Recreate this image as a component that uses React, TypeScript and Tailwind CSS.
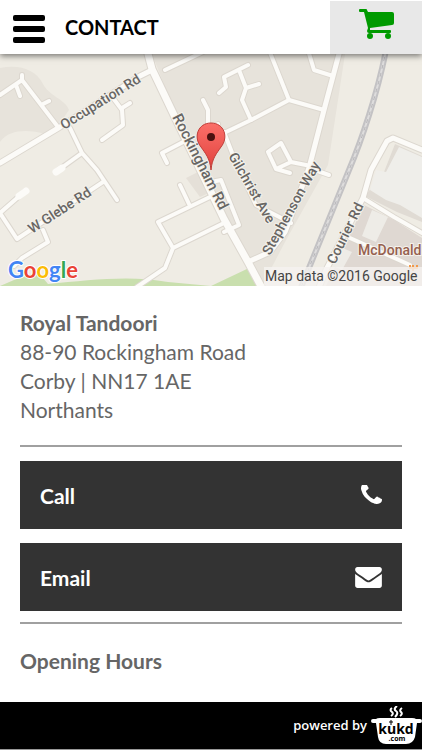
import type { ReactNode } from 'react';

const MINOR_ROADS = [
  'M0 95 L22 80 M16 85 L20 96 M22 75 L22 80 L58 127 M43 104 L49 101',
  'M70 128 L82 153 L97 170 L117 200 M82 153 L57 171',
  'M103 182 L17 239 L0 213 L24 192 M43 230 L48 242 L22 258 L14 266',
  'M113 98 L122 110 L123 125 L102 140 M122 108 L130 103',
  'M165 70 L203 52 M203 100 L208 110 L208 130',
  'M167 163 L162 153 L187 140',
  'M180 185 L189 204 M212 196 L158 222 L173 248 L165 268 L137 287 M173 248 L224 223',
  'M211 182 L221 180 L239 225 L224 232',
  'M219 93 L226 87 L224 77 L248 65 M239 70 L246 88 L259 84 M246 88 L242 100 L251 120',
  'M269 50 L289 100 M308 50 L314 70 L333 76',
  'M218 124 L211 128 M226 132 L251 120 L289 100 L324 110',
  'M224 132 L236 163 L256 205 L291 223',
  'M268 152 L281 143 L291 162 L311 166 M268 152 L276 169 L291 162 M276 169 L290 173 M309 168 L329 175',
  'M363 198 L394 217 L422 233 M350 238 L410 265',
];

const MAIN_ROADS = [
  'M152 70 L140 76 L60 127 L0 163',
  'M340 50 L324 110 L309 168 L285 232 L270 252 L248 262',
  'M422 150 L393 138 L387 141 L371 170 L363 198 L326 270 L318 290',
];

const ROCKINGHAM_ROAD = 'M147 50 L152 69 L173 113 L224 219 L248 262 L263 290';
const RAILWAY = 'M386 50 C378 92 361 142 349 170 L300 290';

interface MapLabelProps {
  x: number;
  y: number;
  angle: number;
  size?: number;
  children: ReactNode;
}

function MapLabel({ x, y, angle, size = 14, children }: MapLabelProps) {
  return (
    <text
      x={x}
      y={y}
      transform={`rotate(${angle} ${x} ${y})`}
      fontSize={size}
      fontWeight="500"
      fill="#686664"
      stroke="#f4f2ec"
      strokeWidth="2"
      paintOrder="stroke"
    >
      {children}
    </text>
  );
}

function LocationMap() {
  return (
    <svg
      viewBox="0 54 422 232"
      preserveAspectRatio="xMidYMid slice"
      role="img"
      aria-label="Map of Rockingham Road, Corby"
      className="block h-[232px] w-full bg-[#efece4] font-['Roboto','Liberation_Sans',sans-serif]"
    >
      <defs>
        <linearGradient id="pin" x1="0" y1="0" x2="0" y2="1">
          <stop offset="0" stopColor="#fb6f69" />
          <stop offset="1" stopColor="#e0423d" />
        </linearGradient>
      </defs>

      <rect y="54" width="422" height="232" fill="#efece4" />
      <path d="M0 68 C20 64 36 70 43 84 C48 95 66 100 69 110 L57 127 L45 134 C30 130 10 128 0 142Z" fill="#e7e3db" />
      <path d="M152 54 H345 L338 100 L328 165 L285 242 L262 286 L248 262 L182 130Z" fill="#e7e3db" />
      <path d="M186 178 L202 170 L211 192 L200 197Z" fill="#e5e0d8" />
      <path d="M384 172 L395 144 L422 156 V222 L397 212 L365 196Z" fill="#e0dbd4" />
      <path d="M399 147 L422 157 V218 L400 205 L386 200 L370 190 L376 170 L386 172Z" fill="#efeeea" />
      <path d="M364 205 L394 220 L422 238 V286 H326Z" fill="#dfd8d2" />
      <path d="M372 210 L388 217 L376 242 L362 236Z M340 247 L352 252 L342 270 L333 266Z" fill="#eeece7" />
      <path d="M0 286 L14 280 L38 272 L48 284 C90 280 130 275 168 282 L211 286 L249 268 L260 290 H0Z" fill="#c9dfae" />

      <g fill="none" strokeLinecap="round" strokeLinejoin="round">
        <g stroke="#dcd7cf">
          {MINOR_ROADS.map((d) => (
            <path key={d} d={d} strokeWidth="6" />
          ))}
          {MAIN_ROADS.map((d) => (
            <path key={d} d={d} strokeWidth="7" />
          ))}
          <path d={ROCKINGHAM_ROAD} strokeWidth="9" />
        </g>
        <g stroke="#fcfbf8">
          {MINOR_ROADS.map((d) => (
            <path key={d} d={d} strokeWidth="4" />
          ))}
          {MAIN_ROADS.map((d) => (
            <path key={d} d={d} strokeWidth="5" />
          ))}
          <path d={ROCKINGHAM_ROAD} strokeWidth="7" />
          <path d="M19 196 L26 191 M56 172 L62 168" strokeWidth="7" />
        </g>
        <path d={RAILWAY} stroke="#c3c2c4" strokeWidth="6" />
        <path d={RAILWAY} stroke="#dedddd" strokeWidth="2" />
        <path d={RAILWAY} stroke="#b5b4b7" strokeWidth="1" strokeDasharray="3 5" />
      </g>

      <MapLabel x={64} y={130} angle={-32}>Occupation Rd</MapLabel>
      <MapLabel x={32} y={234} angle={-33}>W Glebe Rd</MapLabel>
      <MapLabel x={172} y={117} angle={63} size={15}>Rockingham Rd</MapLabel>
      <MapLabel x={228} y={156} angle={60}>Gilchrist Ave</MapLabel>
      <MapLabel x={270} y={256} angle={-61}>Stephenson Way</MapLabel>
      <MapLabel x={335} y={265} angle={-64}>Courier Rd</MapLabel>
      <text
        x="358"
        y="255"
        fontSize="14"
        fontWeight="500"
        fill="#96604f"
        stroke="#f4f2ec"
        strokeWidth="2"
        paintOrder="stroke"
      >
        McDonald
      </text>
      <path d="M410 265 V268 H417 V265 M413 265 V271" fill="none" stroke="#f2994a" strokeWidth="2" />

      {/* pin */}
      <path
        d="M211 170 C210 158 205 153 201 147 C193 137 198 123 211 123 C224 123 229 137 221 147 C217 153 212 158 211 170Z"
        fill="url(#pin)"
        stroke="#c03c37"
        strokeWidth="1"
      />
      <circle cx="211" cy="137" r="4" fill="#49100f" />

      <text
        x="8"
        y="278"
        fontSize="22"
        fontWeight="700"
        stroke="#ffffff"
        strokeWidth="2"
        paintOrder="stroke"
        className="font-['Lato',sans-serif]"
      >
        <tspan fill="#4285f4">G</tspan>
        <tspan fill="#ea4335">o</tspan>
        <tspan fill="#fbbc05">o</tspan>
        <tspan fill="#4285f4">g</tspan>
        <tspan fill="#34a853">l</tspan>
        <tspan fill="#ea4335">e</tspan>
      </text>

      <rect x="264" y="267" width="158" height="19" fill="#f5f3f0" fillOpacity="0.8" />
      <text x="265" y="281" fontSize="14" fill="#444444">Map data ©2016 Google</text>
    </svg>
  );
}

function CartIcon() {
  return (
    <svg viewBox="0 0 35 30" aria-hidden="true" className="h-[30px] w-[35px]" fill="#009a00">
      <path d="M1 0 H7 Q8 0 8 1 L9 3 H33 Q35 3 35 5 V14 Q35 16 33 16 L11 19 L11 21 H31 Q32 21 32 22 V23 Q32 24 31 24 H10 Q8 24 8 22 L9 19 L5 3 H1 Q0 3 0 2 V1 Q0 0 1 0Z" />
      <circle cx="11" cy="27" r="3" />
      <circle cx="29" cy="27" r="3" />
    </svg>
  );
}

function PhoneIcon() {
  return (
    <svg viewBox="192 256 1408 1408" aria-hidden="true" className="size-[21px]" fill="currentColor">
      <path d="M1600 1240q0 27-10 70.500t-21 68.500q-21 50-122 106-94 51-186 51-27 0-52.500-3.500t-57.500-12.500-47.500-14.500-55.500-20.500-49-18q-98-35-175-83-128-79-264.500-215.500t-215.500-264.500q-48-77-83-175-3-9-18-49t-20.500-55.500-14.500-47.500-12.500-57.500-3.500-52.500q0-92 51-186 56-101 106-122 25-11 68.500-21t70.500-10q14 0 21 3 18 6 53 76 11 19 30 54t35 63.500 31 53.500q3 4 17.500 25t21.500 35.500 7 28.500q0 20-28.500 50t-62 55-62 53-28.500 46q0 9 5 22.500t8.500 20.500 14 24 11.500 19q76 137 174 235t235 174q2 1 19 11.500t24 14 20.500 8.500 22.500 5q18 0 46-28.500t53-62 55-62 50-28.500q14 0 28.500 7t35.500 21.500 25 17.500q25 15 53.500 31t63.500 35 54 30q70 35 76 53 3 7 3 21z" />
    </svg>
  );
}

function EnvelopeIcon() {
  return (
    <svg viewBox="0 256 1792 1408" aria-hidden="true" className="h-[21px] w-[27px]" fill="currentColor">
      <path d="M1792 710v794q0 66-47 113t-113 47h-1472q-66 0-113-47t-47-113v-794q44 49 101 87 362 246 497 345 57 42 92.500 65.500t94.500 48 110 24.500h2q51 0 110-24.500t94.500-48 92.500-65.500q170-123 498-345 57-39 100-87zm0-294q0 79-49 151t-122 123q-376 261-468 325-10 7-42.500 31t-54 38.500-52 32.500-57.500 27-50 9h-2q-23 0-50-9t-57.500-27-52-32.500-54-38.500-42.500-31q-91-64-262-182.500t-205-142.500q-62-42-117-115.500t-55-136.500q0-78 41.500-130t118.500-52h1472q65 0 112.500 47t47.500 113z" />
    </svg>
  );
}

function KukdLogo() {
  return (
    <svg viewBox="0 0 51 40" role="img" aria-label="kukd.com" className="h-10 w-[51px]">
      <path
        d="M0 15 Q0 13 2 13 H5 Q6 12 9 12 H41 Q44 12 45 13 H49 Q51 13 51 15 Q51 17 49 17 H46 L44 31 Q42 38 35 38 H15 Q8 38 7 31 L5 17 H2 Q0 17 0 15Z"
        fill="#ffffff"
      />
      <path
        d="M21 2 Q18 4 21 6 Q23 8 20 10 M26 0 Q22 3 25 5 Q28 7 24 11 M31 2 Q28 4 30 6 Q32 8 29 10"
        fill="none"
        stroke="#ffffff"
        strokeWidth="2"
      />
      <path d="M20 14 V19 M18 16 H22" stroke="#000000" strokeWidth="1" />
      <text textAnchor="middle" fontWeight="700" className="font-['Open_Sans',sans-serif]">
        <tspan x="25" y="28" fontSize="14">kukd</tspan>
        <tspan x="26" y="35" fontSize="7">.com</tspan>
      </text>
    </svg>
  );
}

interface ActionLinkProps {
  href: string;
  label: string;
  icon: ReactNode;
}

function ActionLink({ href, label, icon }: ActionLinkProps) {
  return (
    <a
      href={href}
      className="flex h-[68px] items-center justify-between bg-[#333333] px-5 text-[21px] font-bold text-white"
    >
      {label}
      {icon}
    </a>
  );
}

export default function App() {
  return (
    <div className="flex min-h-screen flex-col bg-white font-['Lato','Liberation_Sans',sans-serif] text-[#666666]">
      <header className="z-10 flex h-[54px] items-stretch justify-between bg-white shadow-[0_2px_6px_rgba(0,0,0,0.5)]">
        <div className="flex items-center gap-5 pl-[13px]">
          <button type="button" aria-label="Menu" className="flex w-8 flex-col gap-[5px] pt-1">
            <span className="h-[6px] w-full rounded-xs bg-black" />
            <span className="h-[6px] w-full rounded-xs bg-black" />
            <span className="h-[6px] w-full rounded-xs bg-black" />
          </button>
          <h1 className="text-xl font-bold text-black">CONTACT</h1>
        </div>
        <button type="button" aria-label="Basket" className="flex w-[92px] items-start justify-center border-t border-white bg-[#e8e8e8] pt-2">
          <CartIcon />
        </button>
      </header>

      <LocationMap />

      <main className="px-5 pt-[22px] text-[21px] leading-[29px]">
        <address className="not-italic">
          <strong className="font-bold">Royal Tandoori</strong>
          <br />
          88-90 Rockingham Road
          <br />
          Corby | NN17 1AE
          <br />
          Northants
        </address>

        <hr className="mt-[21px] border-t-2 border-[#a0a0a0]" />

        <nav aria-label="Contact options" className="mt-[14px] flex flex-col gap-[14px]">
          <ActionLink href="tel:" label="Call" icon={<PhoneIcon />} />
          <ActionLink href="mailto:" label="Email" icon={<EnvelopeIcon />} />
        </nav>

        <hr className="mt-[11px] border-t-2 border-[#a0a0a0]" />

        <h2 className="mt-[22px] font-bold">Opening Hours</h2>
      </main>

      <footer className="mt-auto flex h-12 items-center justify-end gap-1 border-b border-[#999999] bg-black font-['Open_Sans',sans-serif] text-[13px] font-semibold text-white">
        <span>powered by</span>
        <KukdLogo />
      </footer>
    </div>
  );
}
